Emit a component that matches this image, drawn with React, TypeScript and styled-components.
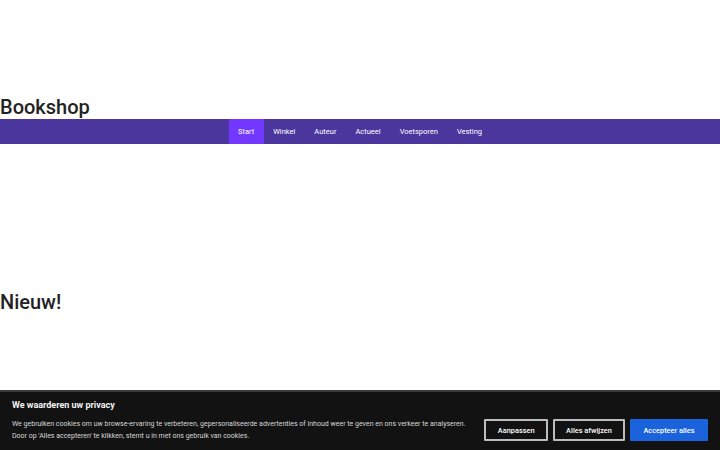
import React from 'react'
import styled, { createGlobalStyle } from 'styled-components'

const GlobalStyle = createGlobalStyle`
  html, body {
    margin: 0;
    padding: 0;
    background: #ffffff;
    font-family: Roboto, 'Liberation Sans', sans-serif;
    color: #222222;
  }
`

const Page = styled.div`
  min-height: 450px;
`

const Header = styled.header`
  padding-top: 95px;
`

const Title = styled.h1`
  margin: 0;
  font-size: 20px;
  line-height: 24px;
  font-weight: 500;
  color: #222222;
`

const Nav = styled.nav`
  height: 25px;
  background: #4b369e;
  display: flex;
  justify-content: center;
`

const NavItem = styled.a<{ $active?: boolean }>`
  display: flex;
  align-items: center;
  padding: 0 9.5px;
  font-size: 7.5px;
  font-weight: 400;
  color: #ffffff;
  text-decoration: none;
  background: ${(props) => (props.$active ? '#7238ff' : 'transparent')};
`

const Main = styled.main`
  padding-top: 146px;
`

const SectionTitle = styled.h2`
  margin: 0;
  font-size: 20px;
  line-height: 24px;
  font-weight: 500;
  color: #222222;
`

const Banner = styled.div`
  position: fixed;
  left: 0;
  right: 0;
  bottom: 0;
  height: 58px;
  background: #121212;
  border-top: 2px solid #3a3a3a;
  padding: 0 12px;
  display: flex;
  flex-direction: column;
  justify-content: center;
  color: #ffffff;
`

const BannerTitle = styled.div`
  font-size: 9px;
  font-weight: 700;
  margin-bottom: 8px;
  color: #f2f2f2;
`

const BannerRow = styled.div`
  display: flex;
  align-items: center;
  justify-content: space-between;
`

const BannerText = styled.p`
  margin: 0;
  font-size: 7px;
  line-height: 12px;
  color: #d6d6d6;
`

const Buttons = styled.div`
  display: flex;
  gap: 4.5px;
`

const Button = styled.button<{ $primary?: boolean }>`
  height: 22px;
  padding: 0 11.5px;
  font-family: Roboto, 'Liberation Sans', sans-serif;
  font-size: 7.4px;
  font-weight: 500;
  color: #ffffff;
  background: ${(props) => (props.$primary ? '#1a63dc' : 'transparent')};
  border: 2px solid ${(props) => (props.$primary ? '#1a63dc' : '#bdbdbd')};
  border-radius: 1px;
  cursor: pointer;
`

const navItems = ['Start', 'Winkel', 'Auteur', 'Actueel', 'Voetsporen', 'Vesting']

export default function App() {
  return (
    <Page>
      <GlobalStyle />
      <Header>
        <Title>Bookshop</Title>
      </Header>
      <Nav>
        {navItems.map((item, index) => (
          <NavItem key={item} href="#" $active={index === 0}>
            {item}
          </NavItem>
        ))}
      </Nav>
      <Main>
        <SectionTitle>Nieuw!</SectionTitle>
      </Main>
      <Banner>
        <BannerTitle>We waarderen uw privacy</BannerTitle>
        <BannerRow>
          <BannerText>
            We gebruiken cookies om uw browse-ervaring te verbeteren, gepersonaliseerde advertenties of inhoud weer te geven en ons verkeer te analyseren.
            <br />
            Door op 'Alles accepteren' te klikken, stemt u in met ons gebruik van cookies.
          </BannerText>
          <Buttons>
            <Button>Aanpassen</Button>
            <Button>Alles afwijzen</Button>
            <Button $primary>Accepteer alles</Button>
          </Buttons>
        </BannerRow>
      </Banner>
    </Page>
  )
}
